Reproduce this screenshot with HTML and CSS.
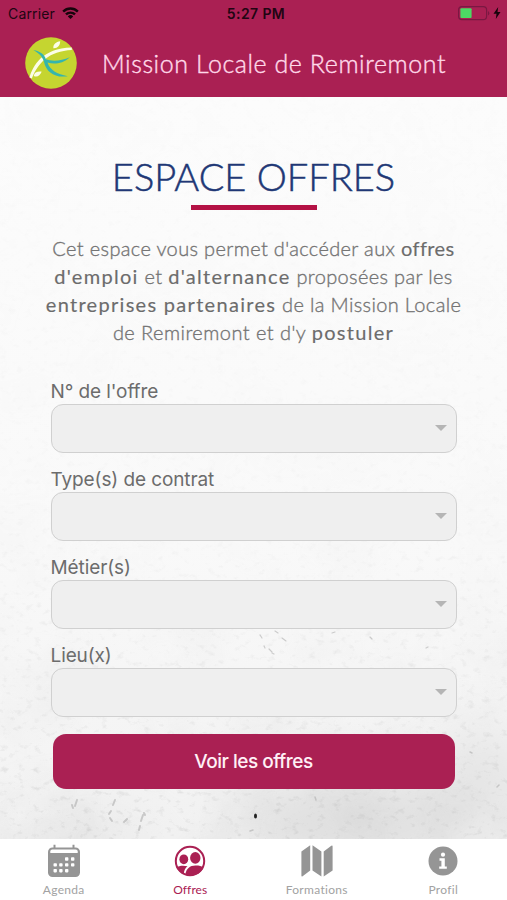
FILE: index.html
```html
<!DOCTYPE html>
<html lang="fr">
<head>
<meta charset="utf-8">
<title>Mission Locale de Remiremont</title>
<link rel="stylesheet" href="styles.css">
</head>
<body>
<div class="app">
  <header class="header">
    <div class="status">
      <div class="status-left">
        <span class="carrier">Carrier</span>
        <svg class="wifi" viewBox="0 0 17 12"><path d="M0.3 3.7a11.6 11.6 0 0 1 16.4 0l-1.7 1.8a9.2 9.2 0 0 0-13 0zM3.1 6.6a7.7 7.7 0 0 1 10.8 0l-1.7 1.7a5.3 5.3 0 0 0-7.4 0zM5.8 9.4a3.9 3.9 0 0 1 5.4 0L8.5 12z"/></svg>
      </div>
      <span class="clock">5:27 PM</span>
      <div class="status-right">
        <svg class="battery" viewBox="0 0 32 15"><rect x=".6" y=".6" width="28" height="13" rx="3.4" fill="none" stroke="#7a1842" stroke-width="1.2"/><rect x="2.4" y="2.3" width="11.2" height="9.6" rx="1" fill="#4cd964"/><path d="M30 5a2.6 2.6 0 0 1 0 4.5z" fill="#7a1842"/></svg>
        <svg class="bolt" viewBox="0 0 8 12"><path d="M5.2 0 .5 6.7h3L2.8 12l4.7-7h-3z"/></svg>
      </div>
    </div>
    <div class="brand">
      <svg class="logo" viewBox="0 0 52 52">
        <circle cx="26" cy="26" r="25.8" fill="#c5d530"/>
        <path d="M4.500 40.500C8 29 17 11.200 46.800 10.600L46.800 13C24 14 13 26 6.800 41.500z" fill="#fcfde8"/>
        <path d="M28.400 11.200C28 7.200 31 5 35.200 4.300C35 8.800 32.800 11.400 28.400 11.200zM8.800 38.900C9.200 35.400 12.500 34.200 16.700 34.700C14.800 38.800 12.200 40.400 8.800 38.900z" fill="#fcfde8"/>
        <path d="M8.300 13C15 14.300 19.700 17.500 20.800 22.300C27.500 24.600 36 24 45 20.200C37.500 26.800 29.500 27.500 22.500 25.600C24.800 33 32 37.500 42.800 39.200C30 41.200 21.200 35.500 18.800 24.200C17.300 19.400 14 16.300 8.300 13z" fill="#35b5ad"/>
      </svg>
      <span class="brand-name">Mission Locale de Remiremont</span>
    </div>
  </header>

  <main class="main">
    <svg class="texture" viewBox="0 0 507 742" preserveAspectRatio="none">
      <defs>
        <filter id="clouds" x="0" y="0" width="100%" height="100%">
          <feTurbulence type="fractalNoise" baseFrequency=".013" numOctaves="4" seed="5"/>
          <feColorMatrix values="0 0 0 0 .45  0 0 0 0 .45  0 0 0 0 .45  1.5 0 0 0 -.6"/>
        </filter>
        <filter id="grain" x="0" y="0" width="100%" height="100%">
          <feTurbulence type="fractalNoise" baseFrequency=".12 .17" numOctaves="4" seed="21"/>
          <feColorMatrix values="0 0 0 0 .4  0 0 0 0 .4  0 0 0 0 .4  2.4 0 0 0 -1.4"/>
        </filter>
        <filter id="soft" x="-50%" y="-50%" width="200%" height="200%"><feGaussianBlur stdDeviation="30"/></filter>
        <linearGradient id="fade" x1="0" y1="0" x2="0" y2="1">
          <stop offset="0" stop-color="#fff" stop-opacity=".06"/>
          <stop offset=".55" stop-color="#fff" stop-opacity=".14"/>
          <stop offset=".8" stop-color="#fff" stop-opacity=".4"/>
          <stop offset="1" stop-color="#fff" stop-opacity=".7"/>
        </linearGradient>
        <linearGradient id="base" x1="0" y1="0" x2="0" y2="1">
          <stop offset="0" stop-color="#fcfcfc"/>
          <stop offset=".6" stop-color="#f9f9f9"/>
          <stop offset="1" stop-color="#f2f2f2"/>
        </linearGradient>
        <mask id="depth"><rect width="507" height="742" fill="url(#fade)"/></mask>
      </defs>
      <rect width="507" height="742" fill="url(#base)"/>
      <g filter="url(#soft)">
        <ellipse cx="350" cy="725" rx="120" ry="35" fill="#dadada"/>
        <ellipse cx="480" cy="690" rx="50" ry="60" fill="#e4e4e4"/>
        <ellipse cx="90" cy="740" rx="60" ry="16" fill="#e2e2e2"/>
      </g>
      <g mask="url(#depth)">
        <rect width="507" height="742" filter="url(#clouds)" opacity=".25"/>
        <rect width="507" height="742" filter="url(#grain)" opacity=".55"/>
      </g>
      <g fill="none" stroke="#a9a9a9" stroke-linecap="round" opacity=".55">
        <path d="M115 703l-2 5M111 714l-2 3M110 721l2 3M143 718l-2 6M140 729l-1 4M144 716l1 2M127 722l-3 3M77 703l-2 6M72 708l1 3" stroke-width="2"/>
        <path d="M260 538l2 3M269 552l3 3M282 541l4 3M264 549l1 2M272 556l2 1M275 534l3 2M335 535l-3 1M370 540l2 2M428 550l-2 1" stroke-width="1.200"/>
        <path d="M497 690l2-2M470 655l2 1M315 700l1 3M253 733l-3 1" stroke-width="1.500"/>
      </g>
      <ellipse cx="255.500" cy="719" rx="1.500" ry="2.600" fill="#222"/>
    </svg>

    <h1 class="title">ESPACE OFFRES</h1>
    <div class="rule"></div>
    <div class="intro">
      <p class="line l1">Cet espace vous permet d'accéder aux <b>offres</b></p>
      <p class="line l2"><b>d'emploi</b> et <b>d'alternance</b> proposées par les</p>
      <p class="line l3"><b>entreprises partenaires</b> de la Mission Locale</p>
      <p class="line l4">de Remiremont et d'y <b>postuler</b></p>
    </div>

    <form class="form">
      <div class="field"><label class="label">N° de l'offre</label><div class="select"></div></div>
      <div class="field"><label class="label">Type(s) de contrat</label><div class="select"></div></div>
      <div class="field"><label class="label">Métier(s)</label><div class="select"></div></div>
      <div class="field"><label class="label">Lieu(x)</label><div class="select"></div></div>
      <button class="submit" type="button">Voir les offres</button>
    </form>
  </main>

  <nav class="tabs">
    <a class="tab">
      <svg class="icon" viewBox="0 0 34 34">
        <rect x="1" y="3.500" width="32" height="29.500" rx="4.500"/>
        <path d="M6.500.8h2v4h-2zM25.500.8h2v4h-2z"/>
        <path d="M3.300 9V7.500a2 2 0 0 1 2-2h23.400a2 2 0 0 1 2 2V9z" fill="#fff"/>
        <g fill="#fff"><rect x="18" y="13.300" width="3.400" height="3.400" rx=".8"/><rect x="24" y="13.300" width="3.400" height="3.400" rx=".8"/><rect x="6.500" y="19.200" width="3.400" height="3.400" rx=".8"/><rect x="12.200" y="19.200" width="3.400" height="3.400" rx=".8"/><rect x="18" y="19.200" width="3.400" height="3.400" rx=".8"/><rect x="24" y="19.200" width="3.400" height="3.400" rx=".8"/><rect x="6.500" y="25" width="3.400" height="3.400" rx=".8"/><rect x="12.200" y="25" width="3.400" height="3.400" rx=".8"/><rect x="18" y="25" width="3.400" height="3.400" rx=".8"/></g>
      </svg>
      <span>Agenda</span>
    </a>
    <a class="tab active">
      <svg class="icon" viewBox="0 0 34 34">
        <circle cx="17" cy="17" r="14.200" fill="#fff" stroke="currentColor" stroke-width="2"/>
        <ellipse cx="10.800" cy="15.300" rx="4.400" ry="4.900"/>
        <ellipse cx="22.300" cy="13.900" rx="5.200" ry="5.900"/>
        <path d="M3.200 23.500C6 21.400 11 21.300 14.500 22.300C12 24.200 11.200 26.300 10.800 29.800C7.500 28.500 4.800 26.500 3.200 23.500z"/>
        <path d="M12.500 30.500C12.700 25 17 21.600 22.500 21.600C26.200 21.600 29 22.200 30.600 23.800C27.700 30 19.500 33.500 12.500 30.500z"/>
      </svg>
      <span>Offres</span>
    </a>
    <a class="tab">
      <svg class="icon" viewBox="0 0 34 34">
        <path d="M1.400 7.400 10.200 1.300V26.600L2.600 32.200Q1.400 33 1.400 31.500zM12.500 1.300 21.400 7.400V32.500L12.500 26.600zM23.700 7.400 31.300 1.700Q32.600.8 32.600 2.500V26.400L23.700 32.500z"/>
      </svg>
      <span>Formations</span>
    </a>
    <a class="tab">
      <svg class="icon" viewBox="0 0 34 34">
        <circle cx="17" cy="17" r="14.500"/>
        <circle cx="17" cy="10.700" r="2.100" fill="#fff"/>
        <path d="M13.500 14.300h5.300v8.100h2v2.300h-7.600v-2.300h2.200v-5.700h-1.900z" fill="#fff"/>
      </svg>
      <span>Profil</span>
    </a>
  </nav>
</div>
</body>
</html>
```
FILE: styles.css
```css
* { box-sizing: border-box; }
body { margin: 0; font-family: Lato, sans-serif; }
.app { width: 507px; height: 900px; display: flex; flex-direction: column; overflow: hidden; }
.header { height: 97px; flex: none; background: #aa2053; }
.status { height: 26px; display: grid; grid-template-columns: 1fr auto 1fr; align-items: center; padding: 0 6px 0 8px; font-family: Inter, sans-serif; color: #210512; }
.status-left { display: flex; align-items: center; gap: 7px; }
.carrier { font-size: 14px; letter-spacing: .15px; }
.wifi { width: 17px; height: 12px; fill: #16040b; }
.clock { font-size: 14px; font-weight: 600; letter-spacing: .4px; padding-left: 3px; }
.status-right { display: flex; align-items: center; justify-content: flex-end; gap: 3px; }
.battery { width: 32px; height: 15px; }
.bolt { width: 8px; height: 12px; fill: #16040b; }
.brand { display: flex; align-items: center; height: 73px; padding-left: 25px; gap: 25px; }
.logo { width: 52px; height: 52px; }
.brand-name { font-size: 25px; font-weight: 300; -webkit-text-stroke: .4px; color: #ffd9e9; white-space: nowrap; letter-spacing: .57px; }
.main { position: relative; flex: 1; display: flex; flex-direction: column; align-items: center; }
.texture { position: absolute; left: 0; top: 0; width: 507px; height: 742px; z-index: -1; }
.title { margin: 56px 0 0; height: 47px; line-height: 46px; font-size: 38px; font-weight: 300; -webkit-text-stroke: .5px; color: #203775; white-space: nowrap; }
.rule { width: 126px; height: 5px; margin-top: 5px; background: #b41245; }
.intro { margin-top: 24px; color: #747474; }
.line { margin: 0; height: 28px; line-height: 28px; font-size: 20px; font-weight: 300; -webkit-text-stroke: .35px; letter-spacing: .35px; text-align: center; white-space: nowrap; }
.line b { font-weight: 400; -webkit-text-stroke: .15px; color: #6c6c6c; letter-spacing: 1.3px; }
.l1 b { letter-spacing: .4px; }
.l4 { letter-spacing: .45px; }
.form { width: 406px; margin-top: 31px; display: flex; flex-direction: column; font-family: Inter, sans-serif; }
.field { height: 88px; }
.label { display: block; height: 27px; line-height: 29px; font-size: 19px; letter-spacing: -.1px; color: #6c6c6c; white-space: nowrap; }
.select { height: 49px; border: 1px solid #d0d0d0; border-radius: 12px; background: #efefef; display: flex; align-items: center; justify-content: flex-end; padding: 0 9px 2px 0; }
.select::after { content: ""; border: 6px solid transparent; border-top: 6px solid #b5b5b5; border-bottom: 0; }
.submit { width: 402px; height: 55px; margin: 5px auto 0; padding: 0; border: 0; border-radius: 13px; background: #aa2053; color: #fff0f6; font: 500 19px Inter, sans-serif; letter-spacing: -.5px; }
.tabs { height: 61px; flex: none; display: grid; grid-template-columns: repeat(4, 126.500px); background: #fff; }
.tab { display: flex; flex-direction: column; align-items: center; padding: 5px 0 0 1px; color: #959595; font-size: 12px; }
.icon { width: 34px; height: 34px; fill: currentColor; }
.tab span { margin-top: 5px; line-height: 14px; letter-spacing: .3px; color: #a2a2a2; }
.tab.active span { letter-spacing: .1px; }
.tab.active, .tab.active span { color: #aa2053; }
```
